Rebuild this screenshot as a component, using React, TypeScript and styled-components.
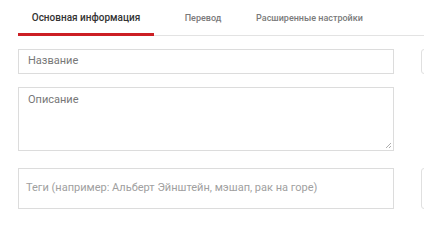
import React from "react";
import styled, { createGlobalStyle } from "styled-components";

const Global = createGlobalStyle`
  html, body { margin: 0; padding: 0; background: #fff; }
  body { font-family: Roboto, "Liberation Sans", Arial, sans-serif; overflow: hidden; }
`;

const Page = styled.div`
  width: 424px;
  height: 248px;
  overflow: hidden;
  padding-left: 18px;
  box-sizing: border-box;
`;

const TabBar = styled.div`
  display: flex;
  align-items: flex-end;
  height: 36px;
  border-bottom: 1px solid #e3e3e3;
  box-sizing: border-box;
`;

const Tab = styled.div<{ $active?: boolean; $w: number }>`
  width: ${(p) => p.$w}px;
  flex: none;
  text-align: center;
  font-size: ${(p) => (p.$active ? 10 : 9)}px;
  font-weight: 500;
  color: ${(p) => (p.$active ? "#333" : "#7a7a7a")};
  padding-bottom: 9px;
  border-bottom: 3px solid ${(p) => (p.$active ? "#cc1f24" : "transparent")};
  margin-bottom: -1px;
  white-space: nowrap;
  line-height: 12px;
`;

const Body = styled.div`
  display: flex;
  gap: 27px;
  padding-top: 13px;
`;

const Form = styled.div`
  width: 376px;
  flex: none;
  display: flex;
  flex-direction: column;
`;

const Field = styled.div<{ $h: number; $gap: number; $pad: number; $left: number; $muted?: boolean }>`
  height: ${(p) => p.$h}px;
  margin-bottom: ${(p) => p.$gap}px;
  border: 1px solid #dcdcdc;
  box-sizing: border-box;
  padding: ${(p) => p.$pad}px 9px 0 ${(p) => p.$left}px;
  font-size: 11px;
  line-height: 14px;
  color: ${(p) => (p.$muted ? "#a0a0a0" : "#777")};
  position: relative;
  white-space: nowrap;
`;

const Grip = styled.svg`
  position: absolute;
  right: 1px;
  bottom: 1px;
`;

const Side = styled.div`
  display: flex;
  flex-direction: column;
`;

const SideBox = styled.div<{ $h: number; $gap: number }>`
  width: 40px;
  height: ${(p) => p.$h}px;
  margin-bottom: ${(p) => p.$gap}px;
  border: 1px solid #e0e0e0;
  border-radius: 3px;
  box-sizing: border-box;
`;

export default function App() {
  return (
    <>
      <Global />
      <Page>
        <TabBar>
          <Tab $active $w={136}>Основная информация</Tab>
          <Tab $w={98}>Перевод</Tab>
          <Tab $w={115}>Расширенные настройки</Tab>
        </TabBar>
        <Body>
          <Form>
            <Field $h={25} $gap={13} $pad={4} $left={9}>Название</Field>
            <Field $h={64} $gap={17} $pad={5} $left={9}>
              Описание
              <Grip width="8" height="8" viewBox="0 0 8 8">
                <path d="M7 2 L2 7 M7 5 L5 7" stroke="#999" strokeWidth="0.8" />
              </Grip>
            </Field>
            <Field $h={41} $gap={0} $pad={12} $left={7} $muted>
              Теги (например: Альберт Эйнштейн, мэшап, рак на горе)
            </Field>
          </Form>
          <Side>
            <SideBox $h={25} $gap={94} />
            <SideBox $h={41} $gap={0} />
          </Side>
        </Body>
      </Page>
    </>
  );
}
